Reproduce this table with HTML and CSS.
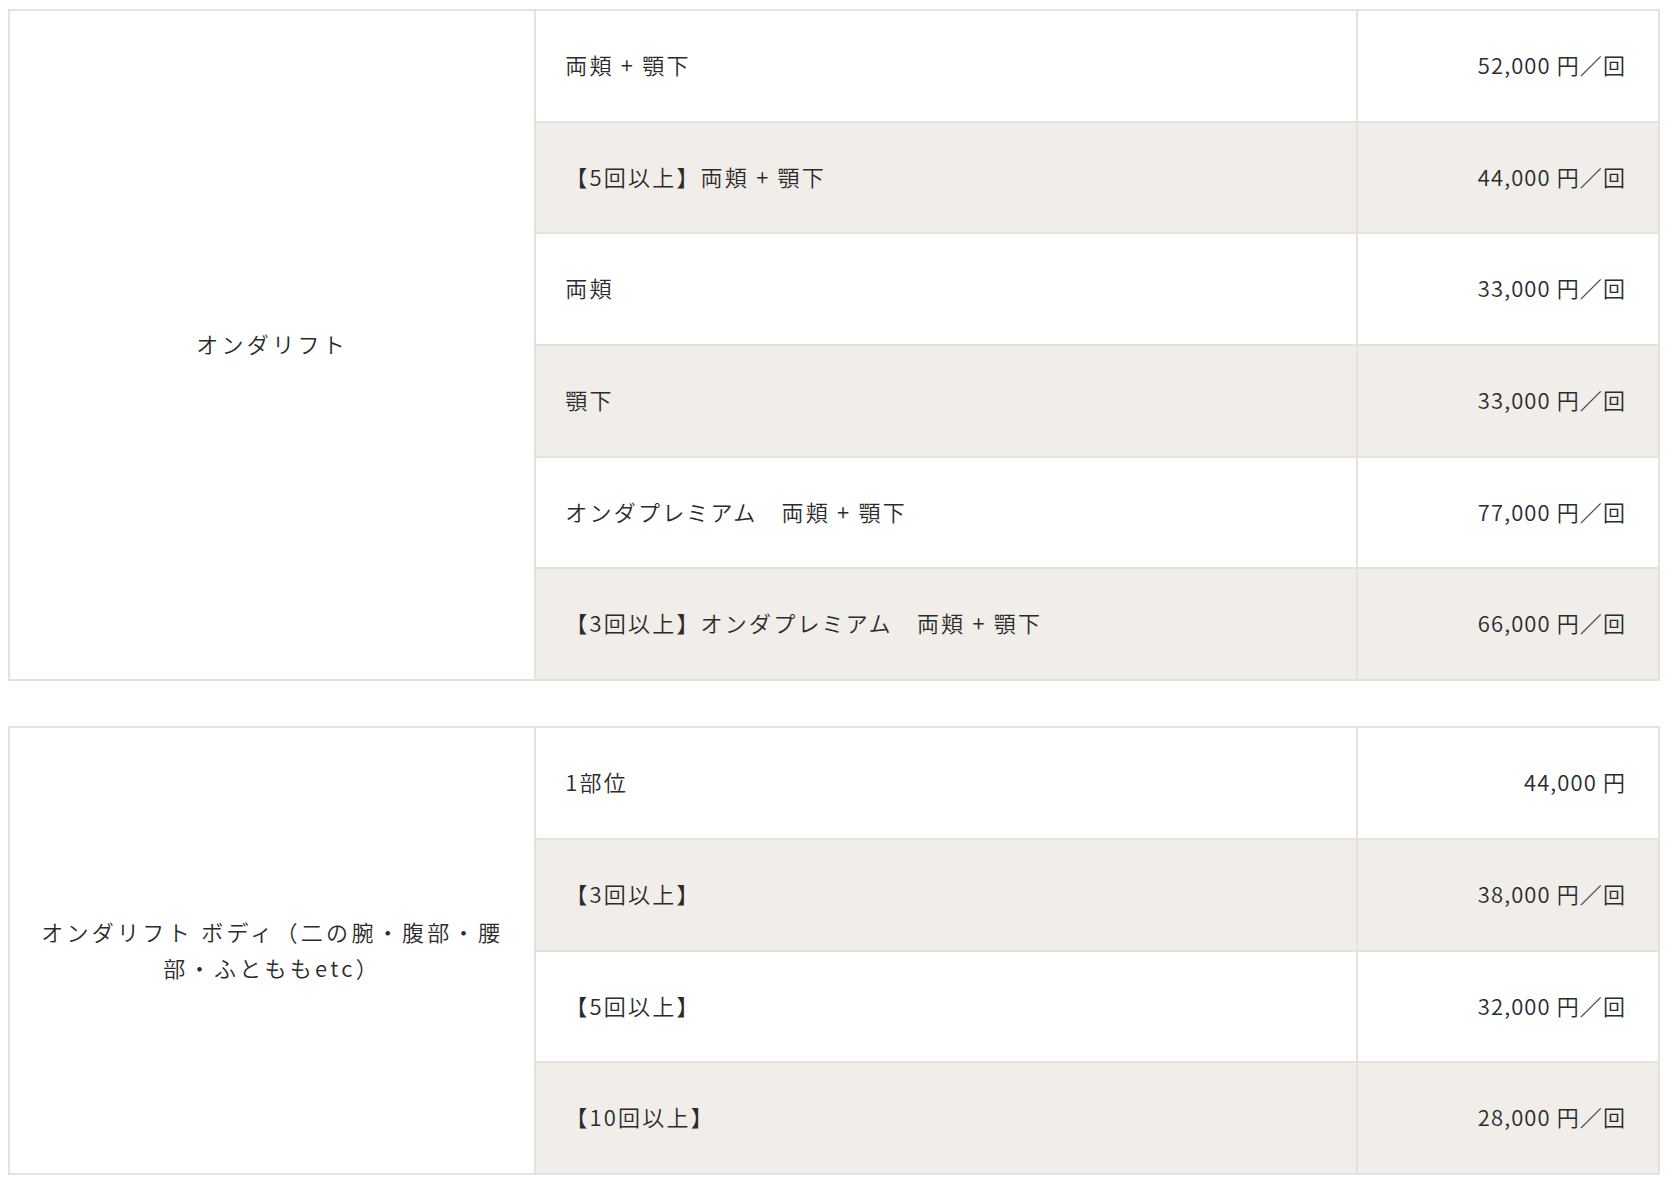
FILE: index.html
```html
<!DOCTYPE html>
<html lang="ja">
<head>
<meta charset="utf-8">
<title>料金表</title>
<link rel="stylesheet" href="styles.css">
</head>
<body>
<table class="price-table">
  <colgroup>
    <col class="col-name">
    <col class="col-item">
    <col class="col-price">
  </colgroup>
  <tbody>
    <tr>
      <th rowspan="6" class="name">オンダリフト</th>
      <td class="item">両頬 + 顎下</td>
      <td class="price">52,000 円／回</td>
    </tr>
    <tr class="alt">
      <td class="item">【5回以上】両頬 + 顎下</td>
      <td class="price">44,000 円／回</td>
    </tr>
    <tr>
      <td class="item">両頬</td>
      <td class="price">33,000 円／回</td>
    </tr>
    <tr class="alt">
      <td class="item">顎下</td>
      <td class="price">33,000 円／回</td>
    </tr>
    <tr>
      <td class="item">オンダプレミアム　両頬 + 顎下</td>
      <td class="price">77,000 円／回</td>
    </tr>
    <tr class="alt">
      <td class="item">【3回以上】オンダプレミアム　両頬 + 顎下</td>
      <td class="price">66,000 円／回</td>
    </tr>
  </tbody>
</table>

<table class="price-table">
  <colgroup>
    <col class="col-name">
    <col class="col-item">
    <col class="col-price">
  </colgroup>
  <tbody>
    <tr>
      <th rowspan="4" class="name">オンダリフト ボディ（二の腕・腹部・腰部・ふとももetc）</th>
      <td class="item">1部位</td>
      <td class="price">44,000 円</td>
    </tr>
    <tr class="alt">
      <td class="item">【3回以上】</td>
      <td class="price">38,000 円／回</td>
    </tr>
    <tr>
      <td class="item">【5回以上】</td>
      <td class="price">32,000 円／回</td>
    </tr>
    <tr class="alt">
      <td class="item">【10回以上】</td>
      <td class="price">28,000 円／回</td>
    </tr>
  </tbody>
</table>
</body>
</html>
```
FILE: styles.css
```css
html, body {
  background: #ffffff;
}

body {
  margin: 8px;
  font-family: "Noto Sans CJK JP", "Noto Sans", sans-serif;
  color: #2b2b2b;
}

.price-table {
  width: 100%;
  border-collapse: collapse;
  table-layout: fixed;
  margin: 1px 0 45px;
}

.price-table:last-child {
  margin-bottom: 0;
}

.col-name { width: 31.9%; }
.col-item { width: 49.8%; }
.col-price { width: 18.3%; }

.price-table th,
.price-table td {
  border: 2px solid #e6e1db;
  font-size: 22px;
  line-height: 36px;
  padding: 35px 32px 38.7px;
  vertical-align: middle;
  font-weight: 350;
}

.price-table .name {
  text-align: center;
  background: #ffffff;
  letter-spacing: 0.15em;
  padding-left: 22px;
  padding-right: 22px;
}

.price-table .item {
  text-align: left;
  letter-spacing: 0.1em;
  padding-left: 29px;
}

.price-table .price {
  text-align: right;
  letter-spacing: 0.05em;
}

.price-table tr.alt td {
  background: #f1eeea;
}
```
